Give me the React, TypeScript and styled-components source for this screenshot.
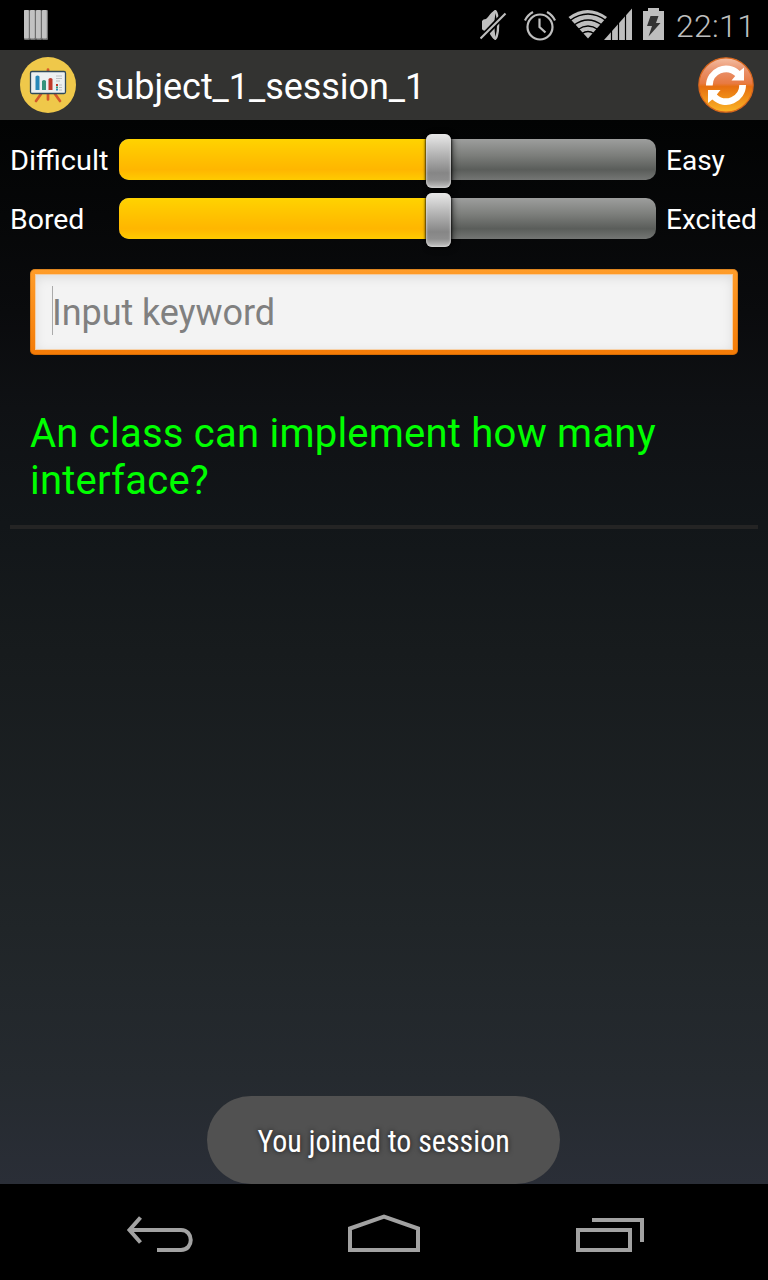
import React from "react";
import styled, { createGlobalStyle } from "styled-components";

const GlobalStyle = createGlobalStyle`
  * { box-sizing: border-box; }
  body { margin: 0; background: #000; font-family: Roboto, "Liberation Sans", sans-serif; }
`;

const Screen = styled.div`
  width: 768px;
  height: 1280px;
  display: flex;
  flex-direction: column;
  overflow: hidden;
  background: #000;
`;

const StatusBar = styled.header`
  height: 50px;
  flex: none;
  display: flex;
  align-items: center;
  justify-content: space-between;
  padding: 0 15px 0 24px;
  background: #000;
`;

const StatusIcons = styled.div`
  display: flex;
  align-items: center;
`;

const Clock = styled.time`
  width: 77px;
  margin-left: 12px;
  font-size: 32px;
  line-height: 50px;
  padding-top: 2px;
  font-weight: 350;
  letter-spacing: 0.3px;
  color: #bebebe;
  white-space: nowrap;
`;

const ActionBar = styled.div`
  height: 70px;
  flex: none;
  display: flex;
  align-items: center;
  padding: 0 14px 0 20px;
  background: #333331;
`;

const Title = styled.h1`
  flex: 1;
  margin: 3px 0 0 20px;
  font-size: 36px;
  line-height: 42px;
  font-weight: 400;
  letter-spacing: -0.05px;
  color: #fff;
`;

const Content = styled.main`
  flex: 1;
  display: flex;
  flex-direction: column;
  background: linear-gradient(#020303 0%, #0a0b0d 18%, #0f1114 27%, #121619 38%, #171b1d 50%, #202528 76%, #252a2f 90%, #2a2e37 100%);
`;

const Ratings = styled.section`
  display: grid;
  grid-template-columns: 109px 537px 1fr;
  grid-template-rows: 59px 59px;
  align-items: center;
  padding: 10px 0 0 10px;
`;

const Label = styled.span<{ $stretch?: number }>`
  padding-top: 2px;
  font-size: 28px;
  line-height: 34px;
  color: #fff;
  white-space: nowrap;
  transform: scaleX(${(p) => p.$stretch ?? 1});
  transform-origin: left;
`;

const RightLabel = styled(Label)`
  padding-left: 10px;
`;

const Track = styled.div`
  height: 41px;
  display: flex;
  align-items: center;
  border-radius: 10px;
  background: linear-gradient(#9d9e9d 0%, #7c7e7b 40%, #5a5d5a 75%, #747674 100%);
`;

const Fill = styled.div`
  height: 41px;
  border-radius: 10px 0 0 10px;
  background: linear-gradient(#ffd300 0%, #ffc100 45%, #ffb600 75%, #ffcb00 100%);
`;

const Thumb = styled.div`
  width: 25px;
  height: 54px;
  flex: none;
  margin-top: 3px;
  border-radius: 6px;
  background: linear-gradient(#e9e9e9 0%, #b8b8b8 35%, #868686 72%, #8e8e8e 85%, #c4c4c4 100%);
  box-shadow: inset 0 0 2px 1px rgba(225, 225, 225, 0.55), 0 0 2px 1px rgba(0, 0, 0, 0.65), 2px 1px 6px rgba(0, 0, 0, 0.5);
`;

const KeywordField = styled.div`
  height: 86px;
  margin: 21px 30px 0;
  padding: 5px;
  border-radius: 5px;
  background: linear-gradient(#ff9d2a, #f47b06);
  box-shadow: inset 0 0 0 1px rgba(120, 60, 0, 0.25);
`;

const FieldInner = styled.div`
  height: 76px;
  display: flex;
  align-items: center;
  padding-left: 17px;
  background: #f3f3f3;
  box-shadow: inset 0 0 0 1px rgba(255, 190, 120, 0.6), inset 0 3px 12px rgba(0, 0, 0, 0.1);
`;

const Caret = styled.i`
  width: 1px;
  height: 49px;
  margin-bottom: 3px;
  background: #aaa;
`;

const Placeholder = styled.span`
  margin: 2px 0 0 -1px;
  font-size: 36px;
  line-height: 42px;
  letter-spacing: -0.08px;
  color: #808080;
`;

const Question = styled.p`
  height: 119px;
  margin: 55px 10px 0;
  padding: 0 20px;
  font-size: 40px;
  line-height: 47px;
  letter-spacing: 0.23px;
  color: #00ff00;
  border-bottom: 4px solid #242424;
`;

const ToastArea = styled.div`
  margin-top: auto;
  display: flex;
  justify-content: center;
`;

const Toast = styled.div`
  width: 353px;
  height: 88px;
  margin-right: 1px;
  border-radius: 44px;
  display: flex;
  align-items: center;
  justify-content: center;
  background: #515151;
`;

const ToastText = styled.span`
  padding-top: 2px;
  font-family: "Roboto Condensed", Roboto, sans-serif;
  font-stretch: 75%;
  font-size: 32px;
  font-weight: 450;
  color: #fff;
  white-space: nowrap;
  transform: scaleX(0.937);
  text-shadow: 0 0 5px rgba(0, 0, 0, 0.7);
`;

const NavBar = styled.nav`
  height: 96px;
  flex: none;
  display: flex;
  align-items: center;
  background: #000;
`;

const StripesIcon = () => (
  <svg width="24" height="30" viewBox="0 0 24 30">
    {[0, 6, 12, 18].map((x) => (
      <g key={x}>
        <rect x={x} width="6" height="30" rx="1" fill="#6e6e6e" />
        <rect x={x} width="4.8" height="28.6" rx="1" fill="#c2c2c2" />
      </g>
    ))}
  </svg>
);

const SystemIcons = () => (
  <svg width="184" height="50" viewBox="480 0 184 50" fill="#bebebe">
    <path d="M482 21q1-2 4-2l2-2q4-6 8-7v30q-4-1-7-8l-2-1q-4 0-5-2z" />
    <ellipse cx="495.300" cy="25" rx="4" ry="15" />
    <path d="M495.500 13q3 12 0 24q-2.200-12 0-24z" fill="#000" />
    <path d="M479.500 40L506 12.500" stroke="#000" strokeWidth="5.500" />
    <path d="M480.500 38.500L505.500 13.500" stroke="#bebebe" strokeWidth="2.200" />
    <g fill="none" stroke="#bebebe" strokeWidth="2.200">
      <circle cx="540" cy="27" r="12.500" />
      <path d="M539.500 18.500V27l6 5.500M525 20.500q2.500-5.500 8-8.500M555 20.500q-2.500-5.500-8-8.500" />
    </g>
    <path d="M568.500 17q19-14 38.500 0L588 38.500z" />
    <g fill="none" stroke="#000" strokeWidth="1.500">
      <path d="M570 20.500q18-13 36 0M574 25q14-10 28 0M578 29.500q10-7 20 0M582 33.500q6-4 12 0" />
    </g>
    <path d="M604 40L632 8.500V40z" />
    <path d="M611.500 20v20M618.500 15v25M625.500 10v30" stroke="#000" strokeWidth="1.200" />
    <path d="M643 11h5V8h11v3h5v29h-21z" />
    <path d="M650.500 16h8l-2.500 7h4.500l-12 13.500 3.500-10.500h-5z" fill="#333" />
  </svg>
);

const BoardIcon = () => (
  <svg width="56" height="56" viewBox="0 0 56 56">
    <circle cx="28" cy="28" r="28" fill="#efc84a" />
    <path d="M28 12.500v30M21 37l-5 7M35 37l5 7" stroke="#d4592b" strokeWidth="2.700" strokeLinecap="round" />
    <rect x="10.500" y="14.500" width="35" height="22" rx="1.500" fill="#ecf0f1" stroke="#2f4a5a" strokeWidth="1.300" />
    <path d="M15.500 19.500q2-2 4 0V33h-4z" fill="#2788b8" />
    <path d="M22 24q2-2 4 0v9h-4z" fill="#35947c" />
    <path d="M28.500 22q2-2 4 0v11h-4z" fill="#c0392b" />
    <path d="M36 19h6M36 21.500h6M36 24h4M39 28h3M39 30.500h3M39 33h3" stroke="#bcc0c2" strokeWidth="1.200" />
    <path d="M36 27h2v2h-2z" fill="#c0392b" />
    <path d="M36 29.500h2v2h-2z" fill="#35947c" />
    <path d="M36 32h2v1.500h-2z" fill="#2788b8" />
  </svg>
);

const arrow = "M8 28.500A20 20 0 0 1 41.700 14L46 10.500V23.500H33.500L37.200 19A13.300 13.300 0 0 0 14.700 28.500Z";

const RefreshIcon = () => (
  <svg width="56" height="56" viewBox="0 0 56 56">
    <defs>
      <linearGradient id="orb" x2="0" y2="1">
        <stop offset="0" stopColor="#f4bea2" />
        <stop offset=".25" stopColor="#e98f68" />
        <stop offset=".47" stopColor="#e87a42" />
        <stop offset=".53" stopColor="#e66f10" />
        <stop offset="1" stopColor="#fbb526" />
      </linearGradient>
    </defs>
    <circle cx="28" cy="28" r="27.200" fill="url(#orb)" stroke="#d8661c" strokeWidth="1.200" />
    <g fill="#fff">
      <path d={arrow} />
      <path d={arrow} transform="rotate(180 28 28.250)" />
    </g>
  </svg>
);

const NavIcons = () => (
  <svg width="768" height="96" viewBox="0 1184 768 96" fill="none" stroke="#a2a2a2" strokeWidth="4">
    <path d="M157 1250h24c13 0 13-20 0-20h-51M140.500 1217.500l-11 12.500 11 12.500" />
    <path d="M350 1228.500l34-12 34 12V1250h-68z" />
    <path d="M578 1230h52v20h-52zM592 1220h50v22" />
  </svg>
);

const ratings = [
  { low: "Difficult", high: "Easy", fill: 307, stretch: 1.035 },
  { low: "Bored", high: "Excited", fill: 307, stretch: 1.015 },
];

export default function App() {
  return (
    <Screen>
      <GlobalStyle />
      <StatusBar>
        <StripesIcon />
        <StatusIcons>
          <SystemIcons />
          <Clock>22:11</Clock>
        </StatusIcons>
      </StatusBar>
      <ActionBar>
        <BoardIcon />
        <Title>subject_1_session_1</Title>
        <RefreshIcon />
      </ActionBar>
      <Content>
        <Ratings>
          {ratings.map((r) => (
            <React.Fragment key={r.low}>
              <Label $stretch={r.stretch}>{r.low}</Label>
              <Track>
                <Fill style={{ width: r.fill }} />
                <Thumb />
              </Track>
              <RightLabel>{r.high}</RightLabel>
            </React.Fragment>
          ))}
        </Ratings>
        <KeywordField>
          <FieldInner>
            <Caret />
            <Placeholder>Input keyword</Placeholder>
          </FieldInner>
        </KeywordField>
        <Question>An class can implement how many interface?</Question>
        <ToastArea>
          <Toast>
            <ToastText>You joined to session</ToastText>
          </Toast>
        </ToastArea>
      </Content>
      <NavBar>
        <NavIcons />
      </NavBar>
    </Screen>
  );
}
